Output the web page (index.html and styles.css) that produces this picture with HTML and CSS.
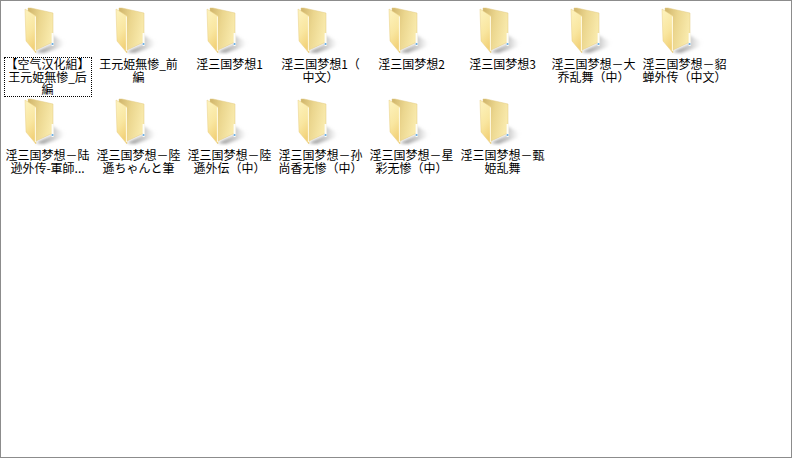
FILE: index.html
```html
<!DOCTYPE html>
<html lang="en">
<head>
    <meta charset="UTF-8">
    <meta name="viewport" content="width=device-width, initial-scale=1.0">
    <title>Folder view</title>
    <link rel="stylesheet" href="styles.css">
</head>
<body>
    <svg class="defs" width="0" height="0">
        <defs>
            <linearGradient id="backFill" x1="0" y1="0" x2="1" y2="0.3">
                <stop offset="0" stop-color="#cfb46a"/>
                <stop offset="0.5" stop-color="#ebd68e"/>
                <stop offset="1" stop-color="#f8e9ab"/>
            </linearGradient>
            <linearGradient id="flapFill" x1="0" y1="0" x2="0.3" y2="1">
                <stop offset="0" stop-color="#fdf3bf"/>
                <stop offset="0.6" stop-color="#f9e6a0"/>
                <stop offset="1" stop-color="#f2d27a"/>
            </linearGradient>
            <linearGradient id="shadowFill" x1="0" y1="0" x2="1" y2="0">
                <stop offset="0" stop-color="#6e6e6e" stop-opacity="0.8"/>
                <stop offset="0.6" stop-color="#9a9a9a" stop-opacity="0.5"/>
                <stop offset="1" stop-color="#bbbbbb" stop-opacity="0"/>
            </linearGradient>
            <filter id="soft" x="-30%" y="-30%" width="160%" height="160%">
                <feGaussianBlur stdDeviation="1.5"/>
            </filter>
            <symbol id="folder" viewBox="0 0 48 48">
                <path d="M12 45 L28 37 L28 28 L41 35 L38 40 L20 46 Z" fill="url(#shadowFill)" filter="url(#soft)"/>
                <path d="M4 1 L7 1 L29 6 L29 35 L12 43 L4 34 Z" fill="url(#backFill)" stroke="#e3cb82" stroke-width="0.5"/>
                <rect x="27.6" y="26" width="2" height="13" fill="#fdfdf8"/>
                <rect x="27.7" y="36" width="1.7" height="2" fill="#6fb2e6"/>
                <path d="M1 2 L12 9 L12 46 L2 34 Z" fill="url(#flapFill)" stroke="#e9cf84" stroke-width="0.5"/>
                <path d="M11.4 9.5 L11.4 44" stroke="#fffbe6" stroke-width="1"/>
            </symbol>
        </defs>
    </svg>

    <div class="desktop">
        <div class="file-grid">
            <div class="file-item selected">
                <svg class="folder-icon"><use href="#folder"/></svg>
                <div class="file-name">【空气汉化組】<br>王元姫無惨_后<br>編</div>
            </div>
            <div class="file-item">
                <svg class="folder-icon"><use href="#folder"/></svg>
                <div class="file-name">王元姫無惨_前<br>編</div>
            </div>
            <div class="file-item">
                <svg class="folder-icon"><use href="#folder"/></svg>
                <div class="file-name">淫三国梦想1</div>
            </div>
            <div class="file-item">
                <svg class="folder-icon"><use href="#folder"/></svg>
                <div class="file-name">淫三国梦想1（<br>中文）</div>
            </div>
            <div class="file-item">
                <svg class="folder-icon"><use href="#folder"/></svg>
                <div class="file-name">淫三国梦想2</div>
            </div>
            <div class="file-item">
                <svg class="folder-icon"><use href="#folder"/></svg>
                <div class="file-name">淫三国梦想3</div>
            </div>
            <div class="file-item">
                <svg class="folder-icon"><use href="#folder"/></svg>
                <div class="file-name">淫三国梦想－大<br>乔乱舞（中）</div>
            </div>
            <div class="file-item">
                <svg class="folder-icon"><use href="#folder"/></svg>
                <div class="file-name">淫三国梦想－貂<br>蝉外传（中文）</div>
            </div>
            <div class="file-item">
                <svg class="folder-icon"><use href="#folder"/></svg>
                <div class="file-name">淫三国梦想－陆<br>逊外传-軍師...</div>
            </div>
            <div class="file-item">
                <svg class="folder-icon"><use href="#folder"/></svg>
                <div class="file-name">淫三国梦想－陸<br>遜ちゃんと筆</div>
            </div>
            <div class="file-item">
                <svg class="folder-icon"><use href="#folder"/></svg>
                <div class="file-name">淫三国梦想－陸<br>遜外伝（中）</div>
            </div>
            <div class="file-item">
                <svg class="folder-icon"><use href="#folder"/></svg>
                <div class="file-name">淫三国梦想－孙<br>尚香无惨（中）</div>
            </div>
            <div class="file-item">
                <svg class="folder-icon"><use href="#folder"/></svg>
                <div class="file-name">淫三国梦想－星<br>彩无惨（中）</div>
            </div>
            <div class="file-item">
                <svg class="folder-icon"><use href="#folder"/></svg>
                <div class="file-name">淫三国梦想－甄<br>姫乱舞</div>
            </div>
        </div>
    </div>
</body>
</html>
```

FILE: styles.css
```css
html, body {
    margin: 0;
    height: 100%;
    background: #ffffff;
}
.defs {
    display: block;
    height: 0;
}
.desktop {
    box-sizing: border-box;
    height: 458px;
    overflow: hidden;
    border: 1px solid #8c8c8c;
    padding: 6px 0 0 3px;
    font-family: "Noto Sans CJK SC", "Noto Sans CJK JP", sans-serif;
    font-size: 12px;
    color: #000000;
}
.file-grid {
    display: grid;
    grid-template-columns: repeat(8, 88px);
    grid-auto-rows: 88px;
    gap: 3px;
}
.file-item {
    display: flex;
    flex-direction: column;
    align-items: center;
}
.folder-icon {
    display: block;
    flex: none;
    width: 48px;
    height: 48px;
    margin-bottom: 2px;
}
.file-name {
    box-sizing: border-box;
    width: 88px;
    padding: 0 1px 0.5px 0;
    border: 1px dotted transparent;
    line-height: 12.5px;
    text-align: center;
    white-space: nowrap;
}
.selected .file-name {
    border-color: #000000;
    position: relative;
    z-index: 1;
}
```
